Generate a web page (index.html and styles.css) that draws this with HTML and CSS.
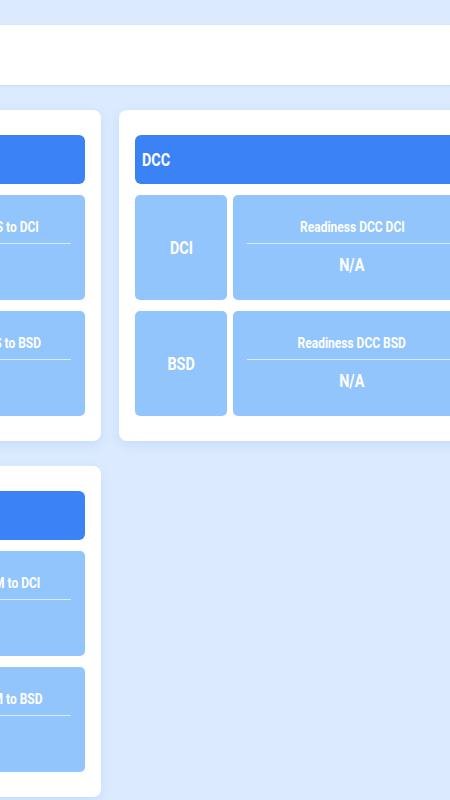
FILE: index.html
```html
<!DOCTYPE html>
<html>
  <head>
    <title>Readiness</title>
    <meta name="viewport" content="width=device-width, initial-scale=1">
    <link rel="stylesheet" href="styles.css">
  </head>
  <body>
    <div class="page">
      <div class="topbar">
        <h1>Readiness Overview</h1>
      </div>

      <div class="board">
        <div class="card">
          <div class="card-head"><span class="cond">DCS</span></div>
          <div class="matrix">
            <div class="cell cell-label"><span class="cond">DCI</span></div>
            <div class="cell cell-value">
              <p class="value-title"><span class="cond">Readiness from DCS to DCI</span></p>
              <p class="value-num"><span class="cond">N/A</span></p>
            </div>
            <div class="cell cell-label"><span class="cond">BSD</span></div>
            <div class="cell cell-value">
              <p class="value-title"><span class="cond">Readiness from DCS to BSD</span></p>
              <p class="value-num"><span class="cond">N/A</span></p>
            </div>
          </div>
        </div>

        <div class="card">
          <div class="card-head"><span class="cond">DCC</span></div>
          <div class="matrix">
            <div class="cell cell-label"><span class="cond">DCI</span></div>
            <div class="cell cell-value">
              <p class="value-title"><span class="cond">Readiness DCC DCI</span></p>
              <p class="value-num"><span class="cond">N/A</span></p>
            </div>
            <div class="cell cell-label"><span class="cond">BSD</span></div>
            <div class="cell cell-value">
              <p class="value-title"><span class="cond">Readiness DCC BSD</span></p>
              <p class="value-num"><span class="cond">N/A</span></p>
            </div>
          </div>
        </div>

        <div class="card">
          <div class="card-head"><span class="cond">DCM</span></div>
          <div class="matrix">
            <div class="cell cell-label"><span class="cond">DCI</span></div>
            <div class="cell cell-value">
              <p class="value-title"><span class="cond">Readiness from DCM to DCI</span></p>
              <p class="value-num"><span class="cond">N/A</span></p>
            </div>
            <div class="cell cell-label"><span class="cond">BSD</span></div>
            <div class="cell cell-value">
              <p class="value-title"><span class="cond">Readiness from DCM to BSD</span></p>
              <p class="value-num"><span class="cond">N/A</span></p>
            </div>
          </div>
        </div>
      </div>
    </div>
  </body>
</html>
```

FILE: styles.css
```css
* {
  box-sizing: border-box;
}

html {
  height: 100%;
}

body {
  margin: 0;
  min-height: 100%;
  overflow: hidden;
  background: #dbeafe;
  color: #fff;
  font-family: Roboto, "Liberation Sans", sans-serif;
}

.page {
  width: 802px;
  margin-left: -291px;
  padding: 25px 24px;
}

.topbar {
  height: 60px;
  margin-bottom: 25px;
  background: #fff;
  box-shadow: 0 1px 3px rgba(59, 130, 246, .15);
}

.topbar h1 {
  margin: 0;
  padding: 18px 20px;
  font-size: 20px;
  color: #1e3a8a;
}

.board {
  display: grid;
  grid-template-columns: 368px 368px;
  gap: 25px 18px;
}

.card {
  background: #fff;
  border-radius: 8px;
  padding: 25px 16px;
  box-shadow: 0 4px 12px rgba(59, 130, 246, .12);
}

.cond {
  display: inline-block;
  transform: scaleX(.8);
  white-space: nowrap;
}

.card-head {
  display: flex;
  align-items: center;
  height: 49px;
  padding: 0 7px;
  margin-bottom: 11px;
  border-radius: 6px;
  background: #3b82f6;
  font-size: 18px;
  font-weight: bold;
}

.card-head .cond {
  transform-origin: left center;
}

.matrix {
  display: grid;
  grid-template-columns: 92px 238px;
  grid-auto-rows: 105px;
  gap: 11px 6px;
}

.cell {
  border-radius: 5px;
  background: #93c5fd;
}

.cell-label {
  display: flex;
  align-items: center;
  justify-content: center;
  font-size: 18px;
  font-weight: bold;
}

.cell-value {
  display: flex;
  flex-direction: column;
  justify-content: center;
  padding: 0 14px;
  text-align: center;
}

.cell-value p {
  margin: 0;
}

.value-title {
  padding-bottom: 6px;
  border-bottom: 1px solid rgba(255, 255, 255, .65);
  font-size: 15px;
  font-weight: bold;
  line-height: 20px;
}

.value-num {
  padding-top: 8px;
  font-size: 18px;
  font-weight: bold;
  line-height: 26px;
}
```
